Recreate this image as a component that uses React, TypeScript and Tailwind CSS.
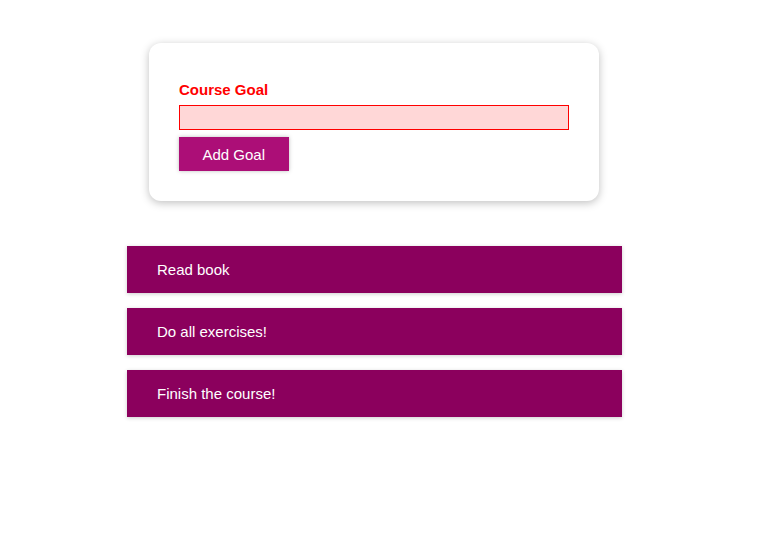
import React from "react";

export default function App() {
  const goals = ["Read book", "Do all exercises!", "Finish the course!"];
  return (
    <div className="min-h-[545px] bg-white font-['Liberation_Sans',Arial,sans-serif] text-[15px] leading-[normal]">
      <div className="flow-root">
        <section className="ml-[149px] mt-[43px] w-[450px] rounded-[12px] bg-white p-[30px] shadow-[0_2px_8px_rgba(0,0,0,0.25)]">
          <form onSubmit={(e) => e.preventDefault()}>
            <div className="my-[7.5px]">
              <label className="mb-[7.5px] block font-bold text-[#ff0000]">Course Goal</label>
              <input
                type="text"
                className="block w-full border border-solid border-[#ff0000] bg-[#ffd7d7] px-[3.75px] leading-[22.5px] outline-none"
              />
            </div>
            <button
              type="submit"
              className="border border-[#ac0e77] bg-[#ac0e77] px-[22.5px] py-[7.5px] leading-[normal] text-white shadow-[0_0_4px_rgba(0,0,0,0.26)]"
            >
              Add Goal
            </button>
          </form>
        </section>
        <section className="ml-[127px] mt-[45px] w-[495px]">
          <ul>
            {goals.map((g) => (
              <li
                key={g}
                className="mb-[15px] bg-[#8b005d] px-[30px] py-[15px] text-white shadow-[0_1px_4px_rgba(0,0,0,0.2)]"
              >
                {g}
              </li>
            ))}
          </ul>
        </section>
      </div>
    </div>
  );
}
